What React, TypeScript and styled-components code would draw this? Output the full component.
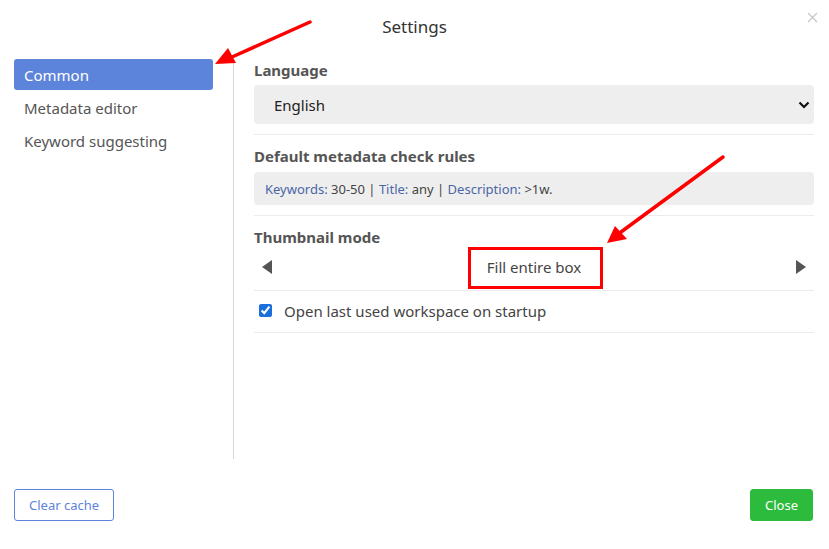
import React from "react";
import styled, { createGlobalStyle } from "styled-components";

const Global = createGlobalStyle`
  html, body { margin: 0; padding: 0; background: #fff; }
  body { font-family: "Noto Sans", "Open Sans", "Liberation Sans", sans-serif; color: #333; }
  * { box-sizing: border-box; }
`;

const Dialog = styled.div`
  position: relative;
  width: 829px;
  height: 549px;
  background: #fff;
  display: flex;
  flex-direction: column;
  overflow: hidden;
`;

const Header = styled.div`
  height: 59px;
  display: flex;
  justify-content: center;
  padding-top: 15px;
`;

const Title = styled.h1`
  margin: 0;
  font-size: 17px;
  font-weight: 400;
  line-height: 24px;
  color: #333;
`;

const CloseX = styled.button`
  position: absolute;
  top: 10px;
  right: 10px;
  width: 14px;
  height: 14px;
  padding: 0;
  border: none;
  background: transparent;
  display: flex;
  align-items: center;
  justify-content: center;
`;

const Body = styled.div`
  display: flex;
  height: 400px;
`;

const Sidebar = styled.nav`
  width: 234px;
  padding: 0 20px 0 14px;
  border-right: 1px solid #d6d6d6;
  display: flex;
  flex-direction: column;
  gap: 2px;
`;

const NavItem = styled.div<{ $active?: boolean }>`
  height: 31px;
  line-height: 32px;
  padding-left: 10px;
  border-radius: 3px;
  font-size: 15px;
  color: ${(p) => (p.$active ? "#fff" : "#555")};
  background: ${(p) => (p.$active ? "#5d84db" : "transparent")};
`;

const Content = styled.div`
  flex: 1;
  padding: 0 15px 0 20px;
  display: flex;
  flex-direction: column;
`;

const Section = styled.div<{ $pt?: number; $pb?: number }>`
  padding-top: ${(p) => p.$pt ?? 10}px;
  padding-bottom: ${(p) => p.$pb ?? 10}px;
  border-bottom: 1px solid #ececec;
`;

const Label = styled.div<{ $mb?: number }>`
  font-size: 15px;
  font-weight: 700;
  color: #555;
  line-height: 22px;
  margin-bottom: ${(p) => p.$mb ?? 4}px;
`;

const SelectWrap = styled.div`
  position: relative;
  height: 39px;
`;

const Select = styled.select`
  appearance: none;
  width: 100%;
  height: 39px;
  border: none;
  border-radius: 4px;
  background: #eeeeee;
  padding: 0 20px;
  font-family: inherit;
  font-size: 15px;
  color: #222;
  outline: none;
`;

const Chevron = styled.svg`
  position: absolute;
  right: 4px;
  top: 16px;
  pointer-events: none;
`;

const RulesBox = styled.div`
  height: 33px;
  margin-top: 5px;
  border-radius: 4px;
  background: #eeeeee;
  padding: 0 11px;
  display: flex;
  align-items: center;
  font-size: 13px;
  color: #444;
  white-space: pre;
`;

const Key = styled.span`
  color: #4a66a6;
`;

const Switcher = styled.div`
  height: 38px;
  display: flex;
  align-items: center;
  justify-content: space-between;
  padding: 0 7px;
`;

const ModeText = styled.span`
  font-size: 15px;
  color: #444;
`;

const ArrowBtn = styled.button`
  border: none;
  background: transparent;
  padding: 0;
  width: 12px;
  height: 16px;
  display: flex;
  align-items: center;
  justify-content: center;
`;

const CheckRow = styled.label`
  height: 21px;
  margin-top: -1px;
  margin-bottom: 1px;
  display: flex;
  align-items: center;
  padding-left: 5px;
  font-size: 15px;
  color: #444;
`;

const Check = styled.input`
  width: 13px;
  height: 13px;
  margin: 0 12px 0 0;
  accent-color: #1a6fdc;
`;

const Footer = styled.div`
  display: flex;
  justify-content: space-between;
  padding: 30px 16px 0 14px;
`;

const Button = styled.button<{ $variant: "outline" | "green" }>`
  height: 32px;
  padding: 0 14px;
  border-radius: 3px;
  font-family: inherit;
  font-size: 13px;
  border: 1px solid ${(p) => (p.$variant === "green" ? "#2dbb3d" : "#5d84db")};
  background: ${(p) => (p.$variant === "green" ? "#2dbb3d" : "#fff")};
  color: ${(p) => (p.$variant === "green" ? "#fff" : "#5d84db")};
`;

const Annotation = styled.svg`
  position: absolute;
  left: 0;
  top: 0;
  pointer-events: none;
`;

const HighlightBox = styled.div`
  position: absolute;
  left: 468px;
  top: 247px;
  width: 135px;
  height: 42px;
  border: 3px solid #ff0000;
  pointer-events: none;
`;

export default function App() {
  return (
    <>
      <Global />
      <Dialog>
        <Header>
          <Title>Settings</Title>
        </Header>
        <CloseX aria-label="close">
          <svg width="11" height="11" viewBox="0 0 11 11">
            <path d="M1 1L10 10M10 1L1 10" stroke="#c8c8c8" strokeWidth="1.3" />
          </svg>
        </CloseX>
        <Body>
          <Sidebar>
            <NavItem $active>Common</NavItem>
            <NavItem>Metadata editor</NavItem>
            <NavItem>Keyword suggesting</NavItem>
          </Sidebar>
          <Content>
            <Section $pt={0}>
              <Label>Language</Label>
              <SelectWrap>
                <Select defaultValue="en">
                  <option value="en">English</option>
                </Select>
                <Chevron width="12" height="8" viewBox="0 0 12 8">
                  <path d="M1.5 1.5L6 6L10.5 1.5" fill="none" stroke="#111" strokeWidth="2.2" />
                </Chevron>
              </SelectWrap>
            </Section>
            <Section>
              <Label>Default metadata check rules</Label>
              <RulesBox>
                <Key>Keywords:</Key>
                {" 30-50 | "}
                <Key>Title:</Key>
                {" any | "}
                <Key>Description:</Key>
                {" >1w."}
              </RulesBox>
            </Section>
            <Section $pb={4}>
              <Label $mb={0}>Thumbnail mode</Label>
              <Switcher>
                <ArrowBtn aria-label="previous">
                  <svg width="10" height="14" viewBox="0 0 10 14">
                    <path d="M10 0L0 7L10 14Z" fill="#555" />
                  </svg>
                </ArrowBtn>
                <ModeText>Fill entire box</ModeText>
                <ArrowBtn aria-label="next">
                  <svg width="10" height="14" viewBox="0 0 10 14">
                    <path d="M0 0L10 7L0 14Z" fill="#555" />
                  </svg>
                </ArrowBtn>
              </Switcher>
            </Section>
            <Section>
              <CheckRow>
                <Check type="checkbox" defaultChecked />
                Open last used workspace on startup
              </CheckRow>
            </Section>
          </Content>
        </Body>
        <Footer>
          <Button $variant="outline">Clear cache</Button>
          <Button $variant="green">Close</Button>
        </Footer>
        <HighlightBox />
        <Annotation width="829" height="549" viewBox="0 0 829 549">
          <line x1="310" y1="22" x2="232" y2="57" stroke="#ff0000" strokeWidth="3.5" strokeLinecap="round" />
          <path d="M215 64L228 48L236 63Z" fill="#ff0000" />
          <line x1="723" y1="157" x2="621" y2="232" stroke="#ff0000" strokeWidth="3.5" strokeLinecap="round" />
          <path d="M607 243L615 226L627 239Z" fill="#ff0000" />
        </Annotation>
      </Dialog>
    </>
  );
}
